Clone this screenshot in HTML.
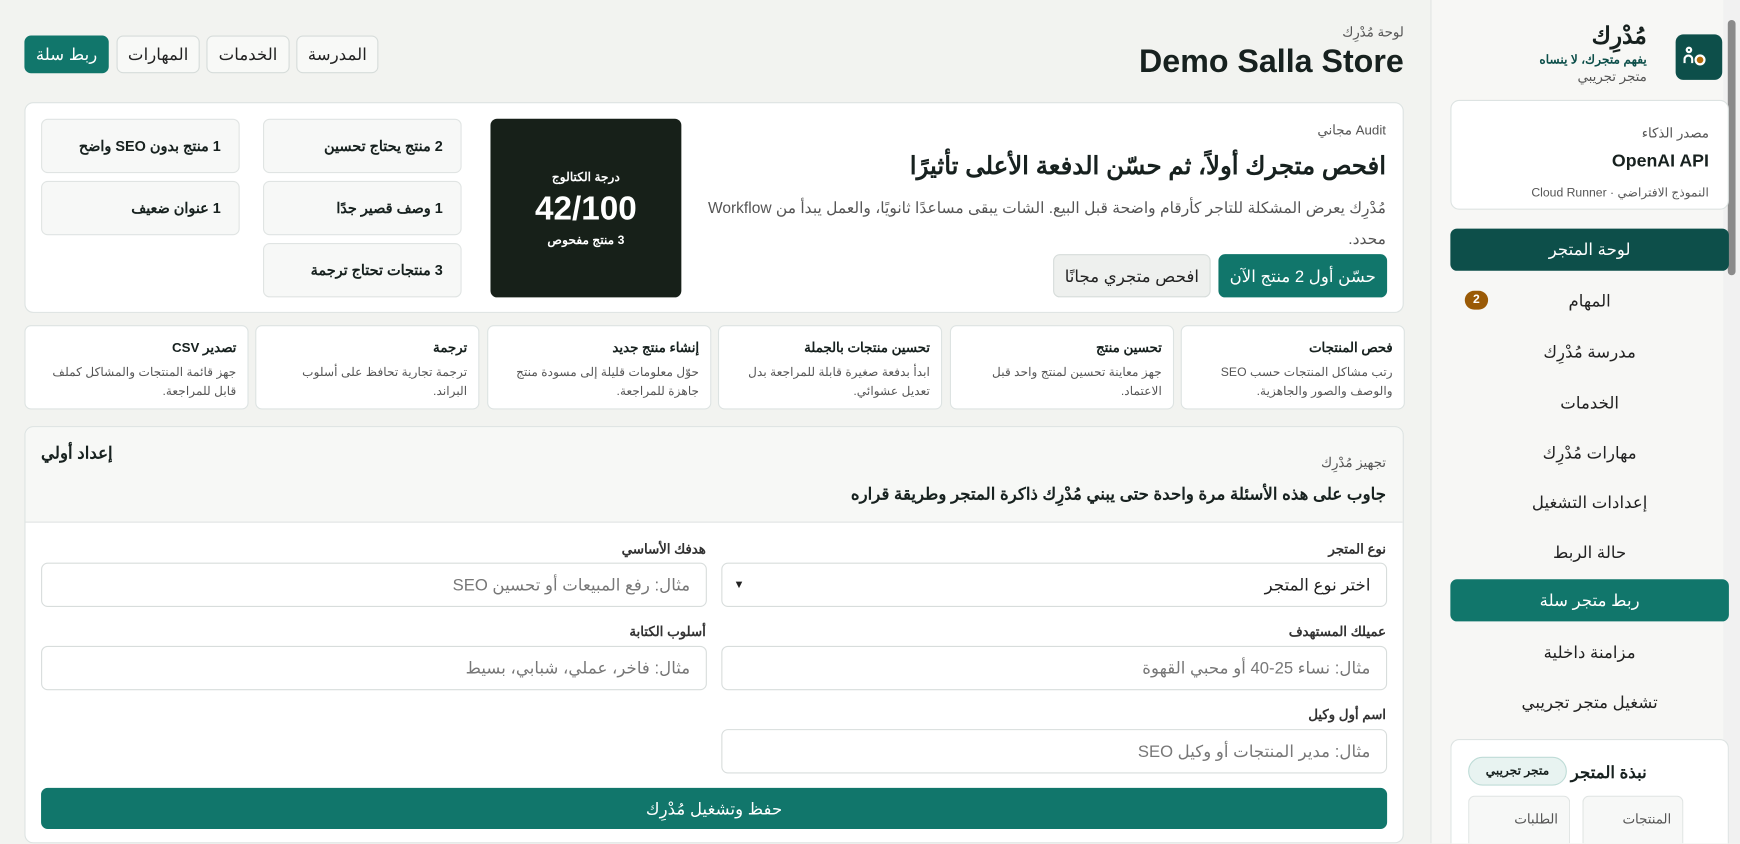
<!DOCTYPE html>
<html lang="ar" dir="rtl"><head><meta charset="utf-8">
<style>
*{box-sizing:border-box;margin:0;padding:0}
html,body{width:1740px;height:844px;overflow:hidden;background:#f2f3f0}
#w{position:absolute;left:0;top:0;width:1568px;height:760px;overflow:hidden;transform:scale(1.10969);transform-origin:0 0;font-family:"Liberation Sans","Noto Sans CJK SC",sans-serif;color:#17211f}
.a{position:absolute}
.card{position:absolute;background:#fff;border:1px solid #dde3e2;border-radius:8px}
.btn{position:absolute;border:1px solid #d6dcda;border-radius:6px;background:#f8f9f7;font-size:15px;display:flex;align-items:center;justify-content:center;color:#222}
.issue{position:absolute;background:#f7f8f7;border:1px solid #e0e4e3;border-radius:6px;font-weight:bold;font-size:13px;padding:0 16px;display:flex;align-items:center;width:179px;height:49px}
.tool{position:absolute;top:293px;width:202px;height:76px;background:#fff;border:1px solid #dde3e2;border-radius:6px;padding:12px 10px}
.tool b{display:block;font-size:12px;margin-bottom:8px}
.tool p{font-size:11px;color:#555;line-height:17px}
.lbl{position:absolute;font-size:12px;font-weight:bold;color:#333}
.inp{position:absolute;height:40px;border:1px solid #d8dddc;border-radius:6px;background:#fff;font-size:15px;color:#777;padding:0 14px;display:flex;align-items:center}
.nav{position:absolute;height:38px;display:flex;align-items:center;justify-content:center;font-size:15px;color:#222;border-radius:6px}
</style></head><body><div id="w">
<!-- sidebar -->
<div class="a" style="left:1289px;top:0;width:264px;height:760px;background:#f7f7f5;border-left:1px solid #e2e5e3"></div>
<div class="a" style="left:1553px;top:0;width:15px;height:760px;background:#f1f1f1"></div>
<div class="a" style="left:1557px;top:18px;width:7px;height:230px;background:#8a8a8a;border-radius:4px"></div>
<div class="a" style="left:1510px;top:31px;width:42px;height:41px;background:#0d4f4a;border-radius:7px"></div>
<div class="a" style="left:1519px;top:42px;width:6px;height:6px;border-radius:50%;border:2px solid #fff"></div>
<div class="a" style="left:1517px;top:49px;width:9px;height:8px;border:2px solid #fff;border-bottom:none;border-radius:5px 5px 0 0"></div>
<div class="a" style="left:1527px;top:49px;width:10px;height:10px;border-radius:50%;background:#b36a08;border:2px solid #fff"></div>
<div class="a" style="right:84px;top:20px;font-size:21px;font-weight:bold">مُدْرِك</div>
<div class="a" style="right:84px;top:47px;font-size:11px;font-weight:bold;color:#0d4f4a">يفهم متجرك، لا ينساه</div>
<div class="a" style="right:84px;top:62px;font-size:12px;color:#555">متجر تجريبي</div>
<div class="card" style="left:1307px;top:90px;width:251px;height:99px;padding:0 17px"><div style="font-size:12px;color:#555;margin-top:22px">مصدر الذكاء</div><div style="font-size:16px;font-weight:bold;margin-top:10px">OpenAI API</div><div style="font-size:11px;color:#555;margin-top:12px">النموذج الافتراضي · Cloud Runner</div></div>
<div class="nav" style="top:206px;left:1307px;width:251px;background:#0d4f4a;color:#fff">لوحة المتجر</div>
<div class="nav" style="top:252px;left:1307px;width:251px">المهام</div>
<div class="a" style="left:1320px;top:262px;width:21px;height:17px;border-radius:9px;background:#9a5a06;color:#fff;font-size:11px;font-weight:bold;text-align:center;line-height:17px">2</div>
<div class="nav" style="top:298px;left:1307px;width:251px">مدرسة مُدْرِك</div>
<div class="nav" style="top:344px;left:1307px;width:251px">الخدمات</div>
<div class="nav" style="top:389px;left:1307px;width:251px">مهارات مُدْرِك</div>
<div class="nav" style="top:434px;left:1307px;width:251px">إعدادات التشغيل</div>
<div class="nav" style="top:479px;left:1307px;width:251px">حالة الربط</div>
<div class="nav" style="top:522px;left:1307px;width:251px;background:#11766b;color:#fff">ربط متجر سلة</div>
<div class="nav" style="top:569px;left:1307px;width:251px">مزامنة داخلية</div>
<div class="nav" style="top:614px;left:1307px;width:251px">تشغيل متجر تجريبي</div>
<div class="card" style="left:1307px;top:666px;width:251px;height:100px;border-bottom:none;border-radius:8px 8px 0 0"></div>
<div class="a" style="right:84px;top:687px;font-size:15px;font-weight:bold">نبذة المتجر</div>
<div class="a" style="left:1323px;top:682px;width:89px;height:26px;border-radius:13px;background:#e8f3f1;border:1px solid #bfdcd7;font-size:11px;font-weight:bold;text-align:center;line-height:24px">متجر تجريبي</div>
<div class="a" style="left:1426px;top:717px;width:91px;height:43px;background:#f7f8f7;border:1px solid #e0e4e3;border-bottom:none;border-radius:6px 6px 0 0;font-size:12px;color:#555;padding:13px 10px">المنتجات</div>
<div class="a" style="left:1323px;top:717px;width:92px;height:43px;background:#f7f8f7;border:1px solid #e0e4e3;border-bottom:none;border-radius:6px 6px 0 0;font-size:12px;color:#555;padding:13px 10px">الطلبات</div>

<!-- header -->
<div class="a" style="right:303px;top:22px;font-size:12px;color:#555">لوحة مُدْرِك</div>
<div class="a" style="right:303px;top:40px;font-size:29px;font-weight:bold" dir="ltr">Demo Salla Store</div>
<div class="btn" style="left:267px;top:32px;width:74px;height:34px">المدرسة</div>
<div class="btn" style="left:186px;top:32px;width:75px;height:34px">الخدمات</div>
<div class="btn" style="left:105px;top:32px;width:75px;height:34px">المهارات</div>
<div class="btn" style="left:22px;top:32px;width:76px;height:34px;background:#11766b;color:#fff;border-color:#11766b">ربط سلة</div>

<!-- audit -->
<div class="card" style="left:22px;top:92px;width:1243px;height:190px"></div>
<div class="a" style="right:319px;top:110px;font-size:12px;color:#555">Audit مجاني</div>
<div class="a" style="right:319px;top:137px;font-size:22px;font-weight:bold">افحص متجرك أولاً، ثم حسّن الدفعة الأعلى تأثيرًا</div>
<div class="a" style="right:319px;top:173px;width:625px;font-size:14px;color:#555;line-height:28px">مُدْرِك يعرض المشكلة للتاجر كأرقام واضحة قبل البيع. الشات يبقى مساعدًا ثانويًا، والعمل يبدأ من Workflow محدد.</div>
<div class="btn" style="left:1098px;top:229px;width:152px;height:39px;background:#11766b;color:#fff;border-color:#11766b">حسّن أول 2 منتج الآن</div>
<div class="btn" style="left:949px;top:229px;width:142px;height:39px;background:#eef0ee">افحص متجري مجانًا</div>
<div class="a" style="left:442px;top:107px;width:172px;height:161px;background:#172019;border-radius:6px;color:#fff;text-align:center"><div style="font-size:11px;font-weight:bold;margin-top:46px">درجة الكتالوج</div><div style="font-size:30px;font-weight:bold;margin-top:6px">42/100</div><div style="font-size:11px;font-weight:bold;margin-top:4px">3 منتج مفحوص</div></div>
<div class="issue" style="left:237px;top:107px">2 منتج يحتاج تحسين</div>
<div class="issue" style="left:37px;top:107px">1 منتج بدون SEO واضح</div>
<div class="issue" style="left:237px;top:163px">1 وصف قصير جدًا</div>
<div class="issue" style="left:37px;top:163px">1 عنوان ضعيف</div>
<div class="issue" style="left:237px;top:219px">3 منتجات تحتاج ترجمة</div>

<!-- tools -->
<div class="tool" style="left:1064px"><b>فحص المنتجات</b><p>رتب مشاكل المنتجات حسب SEO والوصف والصور والجاهزية.</p></div>
<div class="tool" style="left:856px"><b>تحسين منتج</b><p>جهز معاينة تحسين لمنتج واحد قبل الاعتماد.</p></div>
<div class="tool" style="left:647px"><b>تحسين منتجات بالجملة</b><p>ابدأ بدفعة صغيرة قابلة للمراجعة بدل تعديل عشوائي.</p></div>
<div class="tool" style="left:439px"><b>إنشاء منتج جديد</b><p>حوّل معلومات قليلة إلى مسودة منتج جاهزة للمراجعة.</p></div>
<div class="tool" style="left:230px"><b>ترجمة</b><p>ترجمة تجارية تحافظ على أسلوب البراند.</p></div>
<div class="tool" style="left:22px"><b>تصدير CSV</b><p>جهز قائمة المنتجات والمشاكل كملف قابل للمراجعة.</p></div>

<!-- setup -->
<div class="card" style="left:22px;top:384px;width:1243px;height:376px;overflow:hidden"><div style="height:86px;background:#f7f8f6;border-bottom:1px solid #e0e4e3"></div></div>
<div class="a" style="left:37px;top:399px;font-size:15px;font-weight:bold">إعداد أولي</div>
<div class="a" style="right:319px;top:410px;font-size:12px;color:#555">تجهيز مُدْرِك</div>
<div class="a" style="right:319px;top:436px;font-size:15px;font-weight:bold">جاوب على هذه الأسئلة مرة واحدة حتى يبني مُدْرِك ذاكرة المتجر وطريقة قراره</div>
<div class="lbl" style="right:319px;top:488px">نوع المتجر</div>
<div class="lbl" style="right:932px;top:488px">هدفك الأساسي</div>
<div class="inp" style="left:650px;top:507px;width:600px;color:#222">اختر نوع المتجر<span style="position:absolute;left:10px;font-size:10px">▼</span></div>
<div class="inp" style="left:37px;top:507px;width:600px">مثال: رفع المبيعات أو تحسين SEO</div>
<div class="lbl" style="right:319px;top:562px">عميلك المستهدف</div>
<div class="lbl" style="right:932px;top:562px">أسلوب الكتابة</div>
<div class="inp" style="left:650px;top:582px;width:600px">مثال: نساء 25-40 أو محبي القهوة</div>
<div class="inp" style="left:37px;top:582px;width:600px">مثال: فاخر، عملي، شبابي، بسيط</div>
<div class="lbl" style="right:319px;top:637px">اسم أول وكيل</div>
<div class="inp" style="left:650px;top:657px;width:600px">مثال: مدير المنتجات أو وكيل SEO</div>
<div class="btn" style="left:37px;top:710px;width:1213px;height:37px;background:#11766b;color:#fff;border-color:#11766b">حفظ وتشغيل مُدْرِك</div>
</div></body></html>
